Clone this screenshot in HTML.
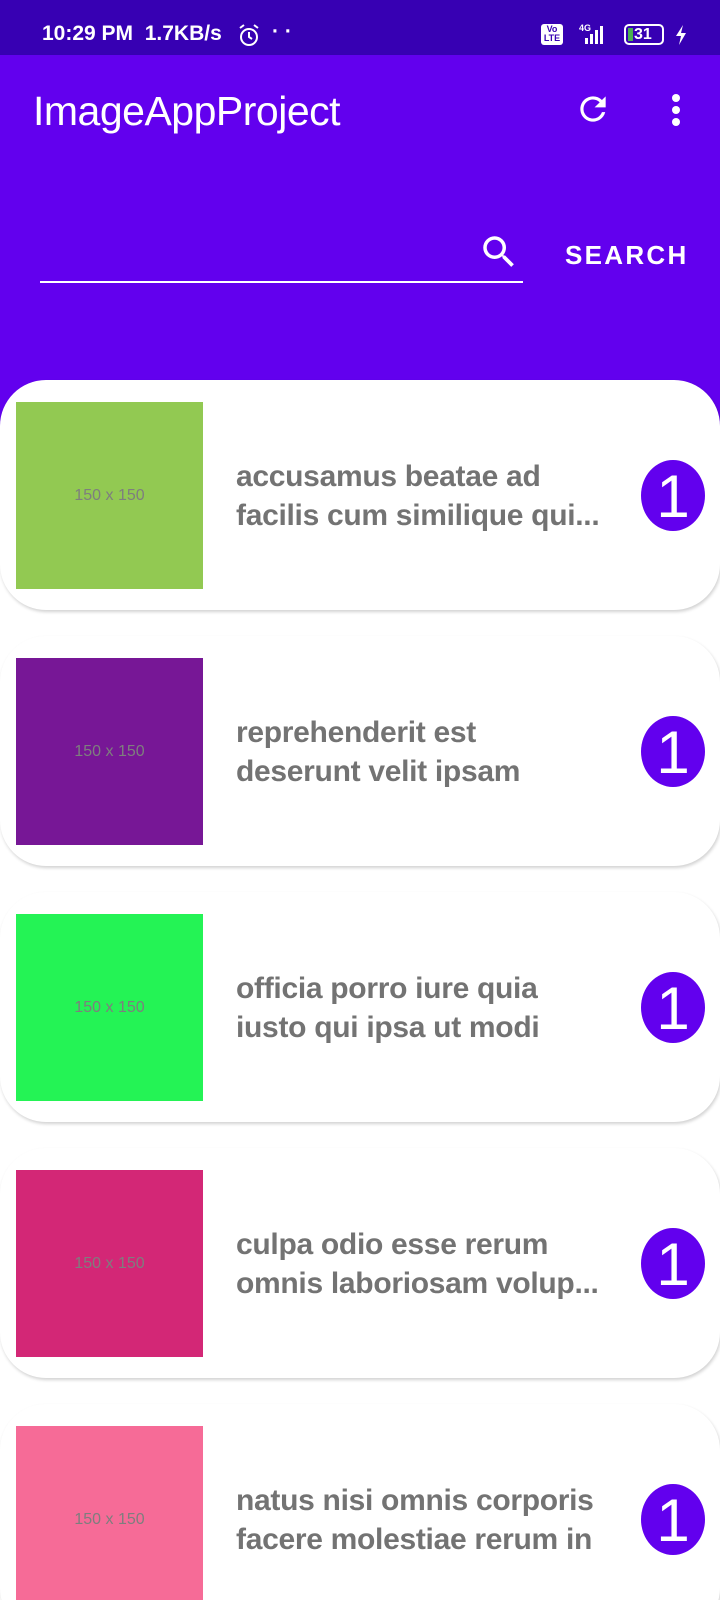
<!DOCTYPE html>
<html style="width:720px;height:1600px;overflow:hidden"><head><meta charset="utf-8"><style>
*{margin:0;padding:0;box-sizing:border-box}
body{width:720px;height:1600px;overflow:hidden;background:#fff;font-family:"Liberation Sans",Roboto,sans-serif}
#w{position:relative;width:720px;height:1600px;overflow:hidden}
.sb{position:absolute;left:0;top:0;width:720px;height:55px;background:#3700b3;color:#fff;font-weight:bold;font-size:21px}
.ab{position:absolute;left:0;top:55px;width:720px;height:111px;background:#6200ee;box-shadow:0 2px 3px rgba(0,0,0,.15)}
.hero{position:absolute;left:0;top:166px;width:720px;height:260px;background:#6200ee}
.card{position:absolute;left:0;width:720px;height:230px;background:#fff;border-radius:46px;box-shadow:1px 2px 3px rgba(0,0,0,.18)}
.img{position:absolute;left:16px;top:22px;width:187px;height:187px;color:#7e7e7e;font-size:16px;display:flex;align-items:center;justify-content:center}
.t{position:absolute;left:236px;top:77px;width:380px;font-size:30px;font-weight:bold;color:#737373;line-height:39px;white-space:nowrap;letter-spacing:-0.3px}
.c{position:absolute;left:641px;top:80px;width:64px;height:71px;border-radius:50%;background:#6200ee;color:#fff;font-size:60px;text-align:center;line-height:74px}
</style></head><body><div id="w">
<div class="sb">
<span style="position:absolute;left:42px;top:22px">10:29 PM&nbsp; 1.7KB/s</span>
<svg style="position:absolute;left:237px;top:23px" width="26" height="26" viewBox="0 0 26 26" fill="none" stroke="#fff" stroke-width="2"><circle cx="12" cy="14" r="8"/><path d="M12 9v5l3 2M3 5l4-3M21 5l-4-3"/></svg>
<span style="position:absolute;left:272px;top:20px">· ·</span>
<div style="position:absolute;left:541px;top:24px;width:22px;height:21px;background:#fff;border-radius:3px;color:#3700b3;font-size:9px;line-height:9px;text-align:center;padding-top:1px">Vo<br>LTE</div>
<svg style="position:absolute;left:573px;top:22px" width="40" height="24"><text x="6" y="9" font-size="9" fill="#fff" font-family="Liberation Sans">4G</text><rect x="12" y="16" width="3" height="6" fill="#fff"/><rect x="17" y="12" width="3" height="10" fill="#fff"/><rect x="22" y="8" width="3" height="14" fill="#fff"/><rect x="27" y="4" width="3" height="18" fill="#fff"/></svg>
<div style="position:absolute;left:624px;top:24px;width:40px;height:21px;border:2px solid #fff;border-radius:5px;font-size:16px;line-height:17px;padding-left:8px"><span style="position:absolute;left:2px;top:2px;width:5px;height:13px;background:#4caf50"></span>31</div>
<svg style="position:absolute;left:673px;top:24px" width="16" height="22"><path d="M10 1L3 12h5l-2 9 7-12H8z" fill="#fff"/></svg>
</div>
<div class="ab">
<div style="position:absolute;left:33px;top:33px;color:#fff;font-size:41px;font-weight:500;letter-spacing:-0.5px">ImageAppProject</div>
<svg style="position:absolute;left:574px;top:35px" width="38" height="38" viewBox="0 0 24 24"><path fill="#fff" d="M17.65 6.35A7.96 7.96 0 0 0 12 4a8 8 0 1 0 7.73 10h-2.08A6 6 0 1 1 12 6c1.66 0 3.14.69 4.22 1.78L13 11h7V4l-2.35 2.35z"/></svg>
<svg style="position:absolute;left:664px;top:38px" width="24" height="34"><circle cx="12" cy="5" r="4" fill="#fff"/><circle cx="12" cy="17" r="4" fill="#fff"/><circle cx="12" cy="29" r="4" fill="#fff"/></svg>
</div>
<div class="hero">
<div style="position:absolute;left:40px;top:115px;width:483px;height:2px;background:#fff"></div>
<svg style="position:absolute;left:478px;top:65px" width="42" height="42" viewBox="0 0 24 24"><path fill="#fff" d="M15.5 14h-.79l-.28-.27A6.47 6.47 0 0 0 16 9.5 6.5 6.5 0 1 0 9.5 16c1.61 0 3.09-.59 4.23-1.57l.27.28v.79l5 4.99L20.49 19l-4.99-5zm-6 0C7.01 14 5 11.99 5 9.5S7.01 5 9.5 5 14 7.01 14 9.5 11.99 14 9.5 14z"/></svg>
<div style="position:absolute;left:565px;top:74px;color:#fff;font-size:26px;font-weight:bold;letter-spacing:2.3px">SEARCH</div>
</div>
<div class="card" style="top:380px"><div class="img" style="background:#92c952">150 x 150</div><div class="t">accusamus beatae ad<br>facilis cum similique qui...</div><div class="c">1</div></div>
<div class="card" style="top:636px"><div class="img" style="background:#771796">150 x 150</div><div class="t">reprehenderit est<br>deserunt velit ipsam</div><div class="c">1</div></div>
<div class="card" style="top:892px"><div class="img" style="background:#24f355">150 x 150</div><div class="t">officia porro iure quia<br>iusto qui ipsa ut modi</div><div class="c">1</div></div>
<div class="card" style="top:1148px"><div class="img" style="background:#d32776">150 x 150</div><div class="t">culpa odio esse rerum<br>omnis laboriosam volup...</div><div class="c">1</div></div>
<div class="card" style="top:1404px"><div class="img" style="background:#f66b97">150 x 150</div><div class="t">natus nisi omnis corporis<br>facere molestiae rerum in</div><div class="c">1</div></div>
</div></body></html>
